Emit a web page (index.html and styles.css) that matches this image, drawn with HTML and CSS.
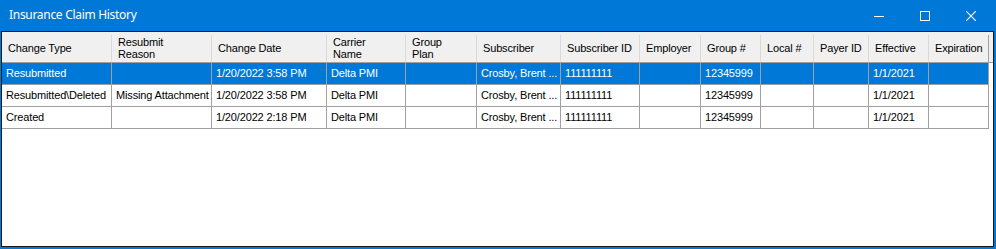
FILE: index.html
```html
<!DOCTYPE html>
<html lang="en">

<head>
    <meta charset="UTF-8">
    <title>Insurance Claim History</title>
    <link rel="stylesheet" href="styles.css">
</head>

<body>
    <div class="window">
        <div class="titlebar">
            <span class="title">Insurance Claim History</span>
            <div class="caption">
                <span class="cap-btn">
                    <svg width="10" height="10" viewBox="0 0 10 10">
                        <line x1="0" y1="5.5" x2="10" y2="5.5" stroke="#fff" stroke-width="1" />
                    </svg>
                </span>
                <span class="cap-btn">
                    <svg width="10" height="10" viewBox="0 0 10 10">
                        <rect x="0.5" y="0.5" width="9" height="9" fill="none" stroke="#fff" stroke-width="1" />
                    </svg>
                </span>
                <span class="cap-btn">
                    <svg width="10" height="10" viewBox="0 0 10 10">
                        <path d="M0 0 L10 10 M10 0 L0 10" stroke="#fff" stroke-width="1.1" />
                    </svg>
                </span>
            </div>
        </div>
        <div class="grid">
            <div class="grid-head">
                <div class="hc">Change Type</div>
                <div class="hc">Resubmit<br>Reason</div>
                <div class="hc">Change Date</div>
                <div class="hc">Carrier<br>Name</div>
                <div class="hc">Group<br>Plan</div>
                <div class="hc">Subscriber</div>
                <div class="hc">Subscriber ID</div>
                <div class="hc">Employer</div>
                <div class="hc">Group #</div>
                <div class="hc">Local #</div>
                <div class="hc">Payer ID</div>
                <div class="hc">Effective</div>
                <div class="hc last">Expiration</div>
            </div>
            <div class="grid-row selected">
                <div class="c">Resubmitted</div>
                <div class="c"></div>
                <div class="c">1/20/2022 3:58 PM</div>
                <div class="c">Delta PMI</div>
                <div class="c"></div>
                <div class="c">Crosby, Brent ...</div>
                <div class="c">111111111</div>
                <div class="c"></div>
                <div class="c">12345999</div>
                <div class="c"></div>
                <div class="c"></div>
                <div class="c">1/1/2021</div>
                <div class="c"></div>
            </div>
            <div class="grid-row">
                <div class="c">Resubmitted\Deleted</div>
                <div class="c">Missing Attachment</div>
                <div class="c">1/20/2022 3:58 PM</div>
                <div class="c">Delta PMI</div>
                <div class="c"></div>
                <div class="c">Crosby, Brent ...</div>
                <div class="c">111111111</div>
                <div class="c"></div>
                <div class="c">12345999</div>
                <div class="c"></div>
                <div class="c"></div>
                <div class="c">1/1/2021</div>
                <div class="c"></div>
            </div>
            <div class="grid-row">
                <div class="c">Created</div>
                <div class="c"></div>
                <div class="c">1/20/2022 2:18 PM</div>
                <div class="c">Delta PMI</div>
                <div class="c"></div>
                <div class="c">Crosby, Brent ...</div>
                <div class="c">111111111</div>
                <div class="c"></div>
                <div class="c">12345999</div>
                <div class="c"></div>
                <div class="c"></div>
                <div class="c">1/1/2021</div>
                <div class="c"></div>
            </div>
        </div>
    </div>
</body>

</html>
```

FILE: styles.css
```css
* {
    padding: 0;
    margin: 0;
    box-sizing: border-box;
}

html,
body {
    width: 100%;
    height: 100%;
    background-color: #ffffff;
}

.window {
    width: 996px;
    height: 249px;
    display: flex;
    flex-direction: column;
    padding: 0 2px 2px 1px;
    /* Windows 10 accent blue */
    background-color: #0078d7;
}

.titlebar {
    height: 31px;
    display: flex;
    align-items: center;
    flex-shrink: 0;
}

.title {
    flex: 1;
    padding-left: 8px;
    color: #ffffff;
    font-family: "Noto Sans", "Liberation Sans", sans-serif;
    font-size: 12px;
    letter-spacing: -0.3px;
    line-height: 16px;
    padding-bottom: 1px;
}

.caption {
    display: flex;
    height: 100%;
}

.cap-btn {
    width: 46px;
    height: 100%;
    display: flex;
    align-items: center;
    justify-content: center;
}

.cap-btn svg {
    display: block;
}

.grid {
    flex: 1;
    border: 1px solid #1a1a1a;
    background-color: #ffffff;
    font-family: "Liberation Sans", Arial, sans-serif;
    font-size: 11px;
    letter-spacing: -0.15px;
    color: #000000;
}

.grid-head,
.grid-row {
    display: grid;
    grid-template-columns: 110px 100px 115px 79px 71px 84px 79px 61px 60px 53px 55px 60px 60px;
}

.grid-head {
    height: 31px;
    background-color: #f0f0f0;
    border-bottom: 1px solid #a0a0a0;
}

.hc {
    display: flex;
    align-items: center;
    padding: 1px 4px 0 6px;
    line-height: 12px;
    white-space: nowrap;
    overflow: hidden;
    /* header separators don't run the full height */
    background: linear-gradient(#d9d9d9, #d9d9d9) no-repeat right 0 top 3px / 1px 26px;
}

.hc.last {
    background: linear-gradient(#a0a0a0, #a0a0a0) no-repeat right 0 top 3px / 1px 27px;
}

.grid-row {
    height: 22px;
}

.c {
    border-right: 1px solid #a0a0a0;
    border-bottom: 1px solid #a0a0a0;
    padding: 0 2px 0 4px;
    line-height: 21px;
    white-space: nowrap;
    overflow: hidden;
}

.grid-row.selected .c {
    background-color: #0078d7;
    color: #ffffff;
}
```
